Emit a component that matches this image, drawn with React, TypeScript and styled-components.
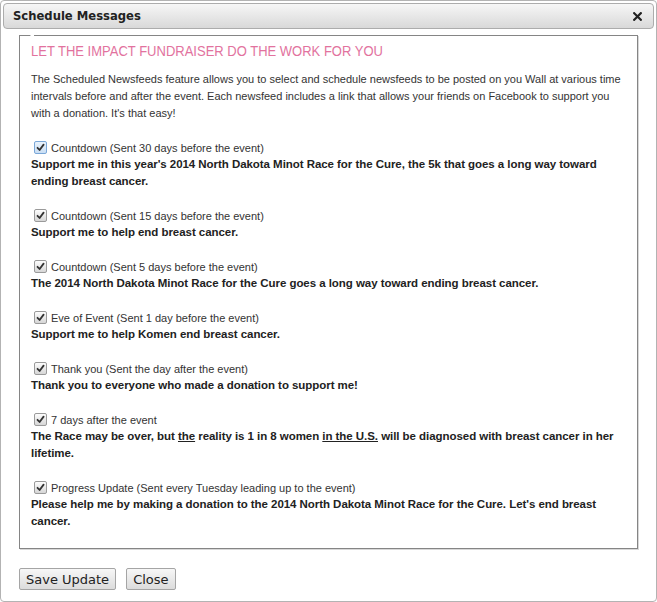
import React from 'react';
import styled, { createGlobalStyle } from 'styled-components';

const GlobalStyle = createGlobalStyle`
  html, body {
    margin: 0;
    padding: 0;
    background: #fff;
  }
`;

const Dialog = styled.div`
  width: 657px;
  height: 602px;
  box-sizing: border-box;
  border: 1px solid #b3b3b3;
  border-radius: 4px;
  padding: 2px;
  background: #fff;
  display: flex;
  flex-direction: column;
`;

const TitleBar = styled.div`
  height: 26px;
  box-sizing: border-box;
  border: 1px solid #acacac;
  border-radius: 4px;
  background: linear-gradient(#f6f6f6, #d9d9d9);
  display: flex;
  align-items: center;
  justify-content: space-between;
  padding: 0 11px 0 9px;

  h1 {
    margin: 0;
    font-family: "DejaVu Sans", Verdana, sans-serif;
    font-size: 11.6px;
    font-weight: 700;
    color: #222;
  }
`;

const CloseIcon = styled.svg`
  width: 9px;
  height: 9px;
  display: block;
`;

const Fieldset = styled.div`
  position: relative;
  margin: 6px 16px 0 16px;
  border: 1px solid #858585;
  box-shadow: 1px 1px 0 #d8d8d8;
  padding: 5px 11px 18px 11px;
  font-family: "Liberation Sans", Arial, sans-serif;
  color: #333;

  &::before {
    content: '';
    position: absolute;
    top: -1px;
    left: 10px;
    width: 3px;
    height: 1px;
    background: #fff;
    border-left: 1px solid #ccc;
  }
`;

const Heading = styled.h2`
  margin: 0 0 10px;
  font-family: "Liberation Sans", Arial, sans-serif;
  font-size: 15px;
  line-height: 20px;
  font-weight: 400;
  color: #e2729e;
  text-transform: uppercase;
  white-space: nowrap;
  transform: scaleX(0.867);
  transform-origin: left center;
`;

const Intro = styled.p`
  margin: 0 0 17px;
  font-size: 11px;
  line-height: 17px;
`;

const Item = styled.div`
  margin-bottom: 17px;

  &:last-child {
    margin-bottom: 0;
  }
`;

const OptionRow = styled.label`
  display: flex;
  align-items: center;
  gap: 4px;
  height: 17px;
  padding-left: 3px;
  font-size: 11px;
  color: #333;
`;

const Box = styled.span<{ $focus?: boolean }>`
  width: 13px;
  height: 13px;
  box-sizing: border-box;
  border: 1px solid ${(p) => (p.$focus ? '#7aa7d8' : '#9a9a9a')};
  border-radius: 2px;
  background: ${(p) =>
    p.$focus ? 'linear-gradient(#eaf3fc, #c9def4)' : 'linear-gradient(#fdfdfd, #d6d6d6)'};
  display: flex;
  align-items: center;
  justify-content: center;
`;

const Message = styled.div`
  font-size: 11.5px;
  line-height: 17px;
  letter-spacing: -0.05px;
  font-weight: 700;
  color: #222;

  u {
    text-decoration: underline;
  }
`;

const Actions = styled.div`
  display: flex;
  gap: 10px;
  margin: 19px 0 0 16px;
`;

const Button = styled.button`
  height: 22px;
  box-sizing: border-box;
  padding: 0 6px;
  border: 1px solid #a5a5a5;
  border-radius: 2px;
  background: linear-gradient(#f7f7f7, #dcdcdc);
  font-family: "DejaVu Sans", Verdana, sans-serif;
  font-size: 13px;
  color: #222;
  cursor: pointer;
`;

const Check: React.FC<{ focus?: boolean }> = ({ focus }) => (
  <Box $focus={focus}>
    <svg width="9" height="9" viewBox="0 0 9 9">
      <path d="M1.5 4.8 L3.6 7 L7.6 1.6" fill="none" stroke="#333" strokeWidth="1.8" strokeLinecap="round" strokeLinejoin="round" />
    </svg>
  </Box>
);

const items: { label: string; message: React.ReactNode; focus?: boolean }[] = [
  {
    label: 'Countdown (Sent 30 days before the event)',
    message:
      "Support me in this year's 2014 North Dakota Minot Race for the Cure, the 5k that goes a long way toward ending breast cancer.",
    focus: true,
  },
  { label: 'Countdown (Sent 15 days before the event)', message: 'Support me to help end breast cancer.' },
  {
    label: 'Countdown (Sent 5 days before the event)',
    message: 'The 2014 North Dakota Minot Race for the Cure goes a long way toward ending breast cancer.',
  },
  { label: 'Eve of Event (Sent 1 day before the event)', message: 'Support me to help Komen end breast cancer.' },
  { label: 'Thank you (Sent the day after the event)', message: 'Thank you to everyone who made a donation to support me!' },
  {
    label: '7 days after the event',
    message: (
      <>
        The Race may be over, but <u>the</u> reality is 1 in 8 women <u>in the U.S.</u> will be diagnosed with breast
        cancer in her lifetime.
      </>
    ),
  },
  {
    label: 'Progress Update (Sent every Tuesday leading up to the event)',
    message:
      "Please help me by making a donation to the 2014 North Dakota Minot Race for the Cure. Let's end breast cancer.",
  },
];

export default function App() {
  return (
    <>
      <GlobalStyle />
      <Dialog>
        <TitleBar>
          <h1>Schedule Messages</h1>
          <CloseIcon viewBox="0 0 9 9">
            <path d="M1.2 1.2 L7.8 7.8 M7.8 1.2 L1.2 7.8" stroke="#222" strokeWidth="2.2" strokeLinecap="square" />
          </CloseIcon>
        </TitleBar>
        <Fieldset>
          <Heading>Let the Impact Fundraiser do the work for you</Heading>
          <Intro>
            The Scheduled Newsfeeds feature allows you to select and schedule newsfeeds to be posted on you Wall at
            various time intervals before and after the event. Each newsfeed includes a link that allows your friends on
            Facebook to support you with a donation. It's that easy!
          </Intro>
          {items.map((it) => (
            <Item key={it.label}>
              <OptionRow>
                <Check focus={it.focus} />
                {it.label}
              </OptionRow>
              <Message>{it.message}</Message>
            </Item>
          ))}
        </Fieldset>
        <Actions>
          <Button>Save Update</Button>
          <Button>Close</Button>
        </Actions>
      </Dialog>
    </>
  );
}
